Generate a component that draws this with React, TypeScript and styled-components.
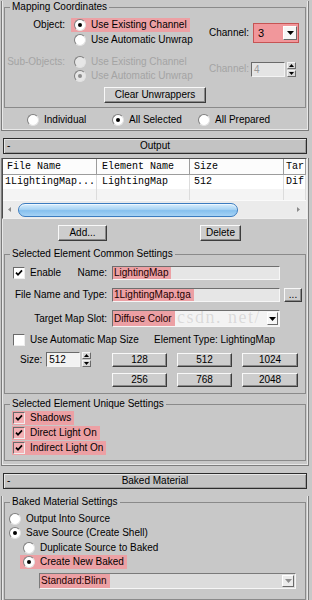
import styled, { createGlobalStyle } from 'styled-components';

const HL = '#eca0a4';

const GlobalStyle = createGlobalStyle`
  html, body { margin: 0; padding: 0; background: #c8c8c8; }
  body {
    font-family: "Liberation Sans", Arial, sans-serif;
    font-size: 10px;
    line-height: 12px;
    color: #000;
  }
  * { box-sizing: border-box; }
`;

const Page = styled.div`
  width: 312px;
  height: 600px;
  overflow: hidden;
  background: #c8c8c8;
`;

const Rollout = styled.div<{ $pb: number }>`
  margin: 0 3px 0 1px;
  padding-bottom: ${(p) => p.$pb}px;
  border: 1px solid #7c7c7c;
  border-top: none;
  box-shadow: inset 1px 0 #e8e8e8, inset -1px -1px #e8e8e8;
`;

const RolloutHeader = styled.div`
  margin: 7px 5px 0 3px;
  height: 16px;
  border: 1px solid #2c2c2c;
  background: #c3c3c3;
  box-shadow: inset 1px 1px #e6e6e6, inset -1px -1px #9c9c9c;
  display: grid;
  grid-template-columns: 1fr auto 1fr;
  align-items: center;
  line-height: 14px;
`;

const Collapse = styled.span`
  padding-left: 3px;
`;

const Group = styled.fieldset<{ $mt: number }>`
  margin: ${(p) => p.$mt}px 2px 0;
  padding: 0;
  min-width: 0;
  border: 1px solid #8a8a8a;
`;

const Legend = styled.legend`
  margin-left: 5px;
  padding: 0 2px;
  height: 12px;
  line-height: 12px;
`;

const GroupBody = styled.div<{ $pt: number; $pb: number; $pl?: number }>`
  padding: ${(p) => p.$pt}px 0 ${(p) => p.$pb}px ${(p) => p.$pl ?? 0}px;
`;

/* radios and checks */

const Option = styled.div<{ $hl?: boolean; $dim?: boolean; $ml?: number; $mt?: number }>`
  display: inline-flex;
  align-items: center;
  gap: 5px;
  height: 14px;
  padding: 0 3px;
  margin-left: ${(p) => p.$ml ?? 0}px;
  margin-top: ${(p) => p.$mt ?? 0}px;
  white-space: nowrap;
  background: ${(p) => (p.$hl ? HL : 'transparent')};
  color: ${(p) => (p.$dim ? '#a4a4a4' : '#000')};
`;

const Radio = styled.span<{ $on?: boolean; $dim?: boolean }>`
  flex: none;
  width: 12px;
  height: 12px;
  border-radius: 50%;
  border: 1px solid;
  border-color: #7e7e7e #e2e2e2 #e2e2e2 #7e7e7e;
  background: ${(p) => (p.$dim ? '#e6e6e6' : '#fff')};
  display: flex;
  align-items: center;
  justify-content: center;
  &::after {
    content: '';
    width: 4px;
    height: 4px;
    border-radius: 50%;
    background: ${(p) => (p.$dim ? '#8c8c8c' : '#000')};
    opacity: ${(p) => (p.$on ? 1 : 0)};
  }
`;

const Check = styled.span<{ $hl?: boolean }>`
  flex: none;
  width: 12px;
  height: 12px;
  border: 1px solid;
  border-color: #6a6a6a #eeeeee #eeeeee #6a6a6a;
  background: ${(p) => (p.$hl ? '#f4b0b4' : '#fff')};
  display: flex;
  align-items: center;
  justify-content: center;
`;

const CheckOption = styled.div<{ $hl?: boolean; $w?: number }>`
  display: inline-flex;
  align-items: center;
  gap: 5px;
  height: 14px;
  padding: 0 3px 0 1px;
  white-space: nowrap;
  width: ${(p) => (p.$w ? `${p.$w}px` : 'auto')};
  background: ${(p) => (p.$hl ? HL : 'transparent')};
`;

function CheckBox({ on, hl }: { on?: boolean; hl?: boolean }) {
  return (
    <Check $hl={hl}>
      {on && (
        <svg width="8" height="8" viewBox="0 0 8 8">
          <path d="M1 3.6 L3 5.8 L7 1.4" stroke="#000" strokeWidth="1.7" fill="none" />
        </svg>
      )}
    </Check>
  );
}

/* buttons and fields */

const Button = styled.button<{ $w: number; $h?: number; $ml?: number }>`
  width: ${(p) => p.$w}px;
  height: ${(p) => p.$h ?? 16}px;
  margin-left: ${(p) => p.$ml ?? 0}px;
  padding: 0;
  font: inherit;
  line-height: 12px;
  color: #000;
  background: #cdcdcd;
  border: 1px solid;
  border-color: #f8f8f8 #3c3c3c #3c3c3c #f8f8f8;
  box-shadow: inset -1px -1px #8a8a8a;
  flex: none;
`;

const ArrowBtn = styled.span<{ $w: number; $h: number; $soft?: boolean }>`
  flex: none;
  width: ${(p) => p.$w}px;
  height: ${(p) => p.$h}px;
  margin-left: auto;
  background: ${(p) => (p.$soft ? '#ececec' : '#f6f6f6')};
  border: 1px solid;
  border-color: #ffffff #6a6a6a #6a6a6a #ffffff;
  display: flex;
  align-items: center;
  justify-content: center;
`;

function DropArrow({ w, h, soft }: { w: number; h: number; soft?: boolean }) {
  return (
    <ArrowBtn $w={w} $h={h} $soft={soft}>
      <svg width="7" height="4" viewBox="0 0 7 4">
        <path d="M0 0h7L3.5 4z" fill={soft ? '#8e8e8e' : '#000'} />
      </svg>
    </ArrowBtn>
  );
}

const Field = styled.div<{ $w: number; $h: number; $bg?: string }>`
  position: relative;
  flex: none;
  width: ${(p) => p.$w}px;
  height: ${(p) => p.$h}px;
  background: ${(p) => p.$bg ?? '#e6e6e6'};
  border: 1px solid;
  border-color: #6e6e6e #f6f6f6 #f6f6f6 #6e6e6e;
  display: flex;
  align-items: stretch;
  padding-right: 1px;
`;

const Mark = styled.span`
  display: flex;
  align-items: center;
  padding: 0 3px 0 1px;
  background: ${HL};
  color: #1c0000;
  white-space: nowrap;
`;

const ArrowSlot = styled.span`
  display: flex;
  align-items: center;
  margin-left: auto;
`;

const Watermark = styled.span`
  position: absolute;
  left: 64px;
  top: -4px;
  font-family: "Liberation Serif", serif;
  font-size: 18px;
  line-height: 20px;
  letter-spacing: 1.5px;
  color: rgba(110, 110, 110, 0.2);
  white-space: nowrap;
  pointer-events: none;
`;

const SpinBox = styled.div`
  display: flex;
  align-items: center;
  gap: 2px;
  flex: none;
`;

const SpinField = styled.div<{ $dim?: boolean }>`
  width: 34px;
  height: 15px;
  padding-left: 2px;
  line-height: 13px;
  background: ${(p) => (p.$dim ? '#e4e4e4' : '#f2f2f2')};
  color: ${(p) => (p.$dim ? '#9a9a9a' : '#000')};
  border: 1px solid;
  border-color: #6a6a6a #f4f4f4 #f4f4f4 #6a6a6a;
`;

const SpinArrows = styled.div`
  width: 9px;
  height: 15px;
  display: flex;
  flex-direction: column;
  gap: 1px;
`;

const SpinBtn = styled.span`
  flex: 1;
  background: #d8d8d8;
  border: 1px solid;
  border-color: #f4f4f4 #6a6a6a #6a6a6a #f4f4f4;
  display: flex;
  align-items: center;
  justify-content: center;
`;

function Spinner({ value, dim }: { value: string; dim?: boolean }) {
  return (
    <SpinBox>
      <SpinField $dim={dim}>{value}</SpinField>
      <SpinArrows>
        <SpinBtn>
          <svg width="5" height="3" viewBox="0 0 5 3">
            <path d="M0 3h5L2.5 0z" fill="#000" />
          </svg>
        </SpinBtn>
        <SpinBtn>
          <svg width="5" height="3" viewBox="0 0 5 3">
            <path d="M0 0h5L2.5 3z" fill="#000" />
          </svg>
        </SpinBtn>
      </SpinArrows>
    </SpinBox>
  );
}

/* mapping coordinates */

const MapRow = styled.div<{ $mt?: number }>`
  display: flex;
  align-items: center;
  margin-top: ${(p) => p.$mt ?? 0}px;
  padding-right: 6px;
`;

const SideLabel = styled.div<{ $dim?: boolean }>`
  flex: none;
  width: 60px;
  align-self: flex-start;
  text-align: right;
  line-height: 14px;
  white-space: nowrap;
  color: ${(p) => (p.$dim ? '#a4a4a4' : '#000')};
`;

const OptionStack = styled.div<{ $gap: number }>`
  flex: 1;
  display: flex;
  flex-direction: column;
  align-items: flex-start;
  gap: ${(p) => p.$gap}px;
  margin-left: 6px;
`;

const ChannelBlock = styled.div`
  flex: none;
  width: 90px;
  display: flex;
  align-items: center;
`;

const ChannelLabel = styled.span<{ $w: number; $dim?: boolean }>`
  flex: none;
  width: ${(p) => p.$w}px;
  color: ${(p) => (p.$dim ? '#a4a4a4' : '#000')};
`;

const ChannelSelect = styled.div`
  width: 46px;
  height: 20px;
  border: 1px solid #c65454;
  background: #f1979b;
  display: flex;
  align-items: center;
  padding: 0 1px 0 4px;
  font-size: 11px;
`;

const Centered = styled.div<{ $mt: number }>`
  display: flex;
  justify-content: center;
  margin-top: ${(p) => p.$mt}px;
`;

const ModeRow = styled.div`
  display: grid;
  grid-template-columns: 85px 86px auto;
  justify-items: start;
  margin-top: 5px;
  padding-left: 22px;
`;

/* output table */

const Table = styled.div`
  margin: 4px 1px 0 0;
  border: 1px solid;
  border-color: #4c4c4c #efefef #efefef #4c4c4c;
  background: #fff;
  font-family: "Liberation Mono", "DejaVu Sans Mono", monospace;
  font-size: 10px;
`;

const TRow = styled.div<{ $h: number; $bg?: string }>`
  display: grid;
  grid-template-columns: 94px 93px 94px 1fr;
  height: ${(p) => p.$h}px;
  background: ${(p) => p.$bg ?? '#fff'};
`;

const HeadCell = styled.div<{ $pl: number }>`
  padding-left: ${(p) => p.$pl}px;
  line-height: 15px;
  white-space: nowrap;
  overflow: hidden;
  background: #fcfcfc;
  border-right: 1px solid #9c9c9c;
  border-bottom: 1px solid #9c9c9c;
`;

const Cell = styled.div<{ $pl: number }>`
  padding-left: ${(p) => p.$pl}px;
  line-height: 14px;
  white-space: nowrap;
  overflow: hidden;
  border-right: 1px solid #dcdcdc;
`;

const ScrollBar = styled.div`
  height: 18px;
  display: flex;
  align-items: center;
  padding-right: 2px;
  background: #ebebeb;
  border-top: 1px solid #fafafa;
`;

const ScrollArrow = styled.span<{ $end?: boolean }>`
  width: 12px;
  height: 14px;
  display: flex;
  align-items: center;
  justify-content: center;
  margin-left: ${(p) => (p.$end ? 'auto' : '0')};
`;

const Thumb = styled.div`
  width: 220px;
  height: 14px;
  margin-left: 3px;
  border-radius: 7px;
  border: 1px solid #3b7cc0;
  background: linear-gradient(#d9eefc, #a9d4f4 45%, #86c0ee 55%, #a6d3f5);
  box-shadow: inset 0 1px #eef8ff;
`;

const ActionRow = styled.div`
  display: flex;
  margin-top: 6px;
`;

/* element settings */

const FormRow = styled.div<{ $mt: number; $h: number }>`
  display: flex;
  align-items: center;
  height: ${(p) => p.$h}px;
  margin-top: ${(p) => p.$mt}px;
`;

const FormLabel = styled.div`
  flex: none;
  width: 102px;
  margin-right: 5px;
  padding-left: 7px;
  display: flex;
  align-items: center;
  justify-content: flex-end;
  white-space: nowrap;
`;

const Push = styled.span`
  margin-right: auto;
`;

const SizeArea = styled.div`
  display: flex;
  align-items: flex-start;
  margin-top: 5px;
`;

const SizeLeft = styled.div`
  flex: none;
  width: 102px;
  height: 15px;
  margin-right: 5px;
  padding-left: 15px;
  display: flex;
  align-items: center;
  gap: 4px;
`;

const SizeGrid = styled.div`
  display: grid;
  grid-template-columns: 55px 55px 56px;
  grid-auto-rows: 14px;
  column-gap: 10px;
  row-gap: 6px;
  margin-top: 1px;
`;

const StackList = styled.div<{ $pl: number; $gap: number }>`
  display: flex;
  flex-direction: column;
  align-items: flex-start;
  gap: ${(p) => p.$gap}px;
  padding-left: ${(p) => p.$pl}px;
`;

const BakedSelect = styled.div`
  margin: 4px 0 0 34px;
  width: 257px;
  height: 16px;
  background: #dcdcdc;
  border: 1px solid;
  border-color: #7a7a7a #f6f6f6 #f6f6f6 #7a7a7a;
  display: flex;
  align-items: stretch;
  padding-right: 1px;
`;

const ArrowLeft = () => (
  <svg width="3" height="5" viewBox="0 0 3 5">
    <path d="M3 0v5L0 2.5z" fill="#8a8a8a" />
  </svg>
);
const ArrowRight = () => (
  <svg width="3" height="5" viewBox="0 0 3 5">
    <path d="M0 0v5L3 2.5z" fill="#8a8a8a" />
  </svg>
);

const sizes = ['128', '512', '1024', '256', '768', '2048'];

export default function App() {
  return (
    <>
      <GlobalStyle />
      <Page>
        <Rollout $pb={3}>
          <Group $mt={1}>
            <Legend>Mapping Coordinates</Legend>
            <GroupBody $pt={5} $pb={4}>
              <MapRow>
                <SideLabel>Object:</SideLabel>
                <OptionStack $gap={1}>
                  <Option $hl>
                    <Radio $on />
                    Use Existing Channel
                  </Option>
                  <Option>
                    <Radio />
                    Use Automatic Unwrap
                  </Option>
                </OptionStack>
                <ChannelBlock>
                  <ChannelLabel $w={44}>Channel:</ChannelLabel>
                  <ChannelSelect>
                    3
                    <DropArrow w={14} h={14} />
                  </ChannelSelect>
                </ChannelBlock>
              </MapRow>
              <MapRow $mt={8}>
                <SideLabel $dim>Sub-Objects:</SideLabel>
                <OptionStack $gap={0}>
                  <Option $dim>
                    <Radio $dim />
                    Use Existing Channel
                  </Option>
                  <Option $dim>
                    <Radio $dim $on />
                    Use Automatic Unwrap
                  </Option>
                </OptionStack>
                <ChannelBlock>
                  <ChannelLabel $w={42} $dim>
                    Channel:
                  </ChannelLabel>
                  <Spinner value="4" dim />
                </ChannelBlock>
              </MapRow>
              <Centered $mt={4}>
                <Button $w={102}>Clear Unwrappers</Button>
              </Centered>
            </GroupBody>
          </Group>
          <ModeRow>
            <Option>
              <Radio />
              Individual
            </Option>
            <Option>
              <Radio $on />
              All Selected
            </Option>
            <Option>
              <Radio />
              All Prepared
            </Option>
          </ModeRow>
        </Rollout>

        <RolloutHeader>
          <Collapse>-</Collapse>
          <span>Output</span>
          <span />
        </RolloutHeader>
        <Rollout $pb={4}>
          <Table>
            <TRow $h={16}>
              <HeadCell $pl={4}>File Name</HeadCell>
              <HeadCell $pl={5}>Element Name</HeadCell>
              <HeadCell $pl={4}>Size</HeadCell>
              <HeadCell $pl={2}>Tar</HeadCell>
            </TRow>
            <TRow $h={14}>
              <Cell $pl={2}>1LightingMap...</Cell>
              <Cell $pl={5}>LightingMap</Cell>
              <Cell $pl={4}>512</Cell>
              <Cell $pl={2}>Dif</Cell>
            </TRow>
            <TRow $h={11} $bg="#f4f4f4">
              <Cell $pl={0} />
              <Cell $pl={0} />
              <Cell $pl={0} />
              <Cell $pl={0} />
            </TRow>
            <ScrollBar>
              <ScrollArrow>
                <ArrowLeft />
              </ScrollArrow>
              <Thumb />
              <ScrollArrow $end>
                <ArrowRight />
              </ScrollArrow>
            </ScrollBar>
          </Table>
          <ActionRow>
            <Button $w={49} $ml={56}>
              Add...
            </Button>
            <Button $w={41} $ml={93}>
              Delete
            </Button>
          </ActionRow>

          <Group $mt={7}>
            <Legend>Selected Element Common Settings</Legend>
            <GroupBody $pt={6} $pb={6}>
              <FormRow $mt={0} $h={14}>
                <FormLabel>
                  <Push>
                    <CheckOption>
                      <CheckBox on />
                      Enable
                    </CheckOption>
                  </Push>
                  Name:
                </FormLabel>
                <Field $w={168} $h={14}>
                  <Mark>LightingMap</Mark>
                </Field>
              </FormRow>
              <FormRow $mt={8} $h={14}>
                <FormLabel>File Name and Type:</FormLabel>
                <Field $w={168} $h={14}>
                  <Mark>1LightingMap.tga</Mark>
                </Field>
                <Button $w={18} $h={14} $ml={4}>
                  ...
                </Button>
              </FormRow>
              <FormRow $mt={8} $h={17}>
                <FormLabel>Target Map Slot:</FormLabel>
                <Field $w={168} $h={17} $bg="#f3f3f3">
                  <Mark>Diffuse Color</Mark>
                  <Watermark>csdn. net/</Watermark>
                  <ArrowSlot>
                    <DropArrow w={11} h={13} />
                  </ArrowSlot>
                </Field>
              </FormRow>
              <FormRow $mt={6} $h={14}>
                <StackList $pl={7} $gap={0}>
                  <CheckOption $w={142}>
                    <CheckBox />
                    Use Automatic Map Size
                  </CheckOption>
                </StackList>
                <span>Element Type: LightingMap</span>
              </FormRow>
              <SizeArea>
                <SizeLeft>
                  Size:
                  <Spinner value="512" />
                </SizeLeft>
                <SizeGrid>
                  {sizes.map((s) => (
                    <Button key={s} $w={s === '1024' || s === '2048' ? 56 : 55} $h={14}>
                      {s}
                    </Button>
                  ))}
                </SizeGrid>
              </SizeArea>
            </GroupBody>
          </Group>

          <Group $mt={4}>
            <Legend>Selected Element Unique Settings</Legend>
            <GroupBody $pt={1} $pb={5}>
              <StackList $pl={7} $gap={1}>
                <CheckOption $hl>
                  <CheckBox on hl />
                  Shadows
                </CheckOption>
                <CheckOption $hl>
                  <CheckBox on hl />
                  Direct Light On
                </CheckOption>
                <CheckOption $hl>
                  <CheckBox on hl />
                  Indirect Light On
                </CheckOption>
              </StackList>
            </GroupBody>
          </Group>
        </Rollout>

        <RolloutHeader>
          <Collapse>-</Collapse>
          <span>Baked Material</span>
          <span />
        </RolloutHeader>
        <Rollout $pb={4}>
          <Group $mt={7}>
            <Legend>Baked Material Settings</Legend>
            <GroupBody $pt={4} $pb={10}>
              <StackList $pl={1} $gap={0}>
                <Option>
                  <Radio />
                  Output Into Source
                </Option>
                <Option>
                  <Radio $on />
                  Save Source (Create Shell)
                </Option>
                <Option $ml={14} $mt={1}>
                  <Radio />
                  Duplicate Source to Baked
                </Option>
                <Option $ml={14} $hl>
                  <Radio $on />
                  Create New Baked
                </Option>
              </StackList>
              <BakedSelect>
                <Mark>Standard:Blinn</Mark>
                <ArrowSlot>
                  <DropArrow w={12} h={12} soft />
                </ArrowSlot>
              </BakedSelect>
            </GroupBody>
          </Group>
        </Rollout>
      </Page>
    </>
  );
}
